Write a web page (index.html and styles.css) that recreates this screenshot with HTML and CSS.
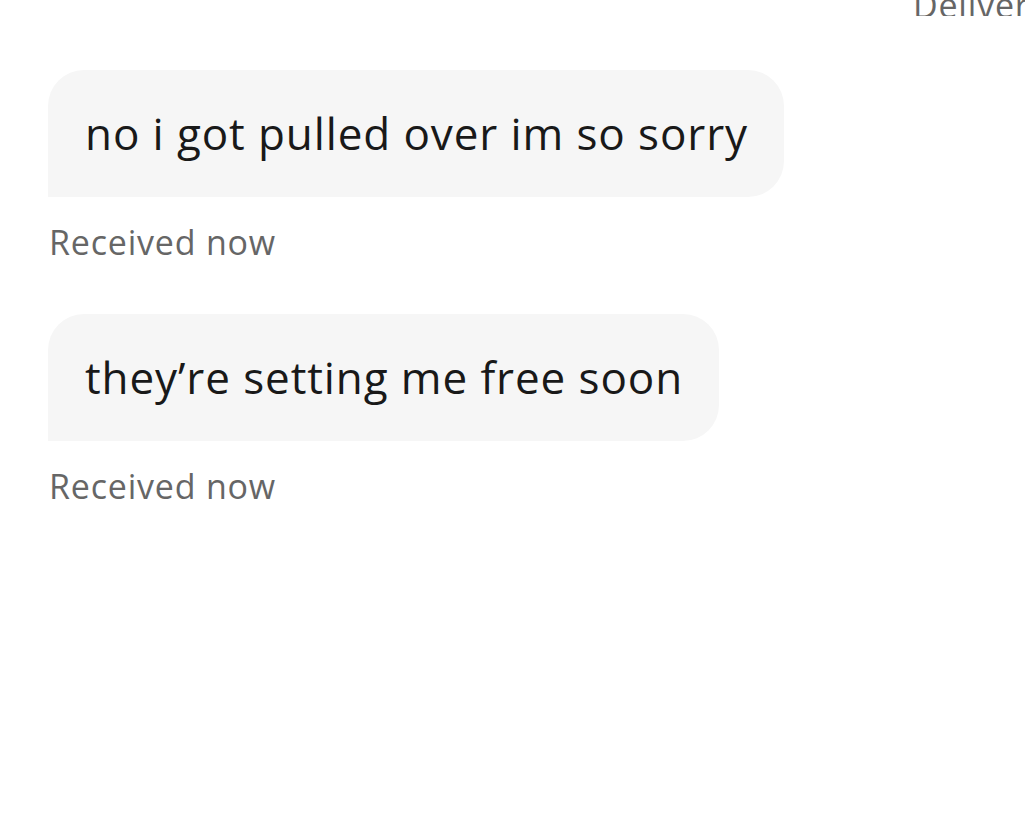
FILE: index.html
```html
<!DOCTYPE html>
<html>
<head>
<meta charset="utf-8">
<link rel="stylesheet" href="styles.css">
</head>
<body>
<div class="status"><span class="status-text">Delivered</span></div>
<div class="thread">
  <div class="msg">
    <div class="bubble">no i got pulled over im so sorry</div>
    <div class="meta">Received now</div>
  </div>
  <div class="msg">
    <div class="bubble">they’re setting me free soon</div>
    <div class="meta">Received now</div>
  </div>
</div>
</body>
</html>
```
FILE: styles.css
```css
html, body {
  margin: 0;
  padding: 0;
  background: #ffffff;
  overflow: hidden;
  width: 1025px;
  height: 823px;
}
body {
  font-family: "Open Sans", sans-serif;
}
.status {
  height: 16px;
  overflow: hidden;
  display: flex;
  align-items: flex-end;
  padding-left: 913px;
  white-space: nowrap;
}
.status-text {
  font-size: 34px;
  font-weight: 500;
  letter-spacing: 0.8px;
  line-height: 30px;
  color: #666666;
  margin-bottom: -4px;
}
.thread {
  display: flex;
  flex-direction: column;
  align-items: flex-start;
  padding-left: 48px;
  padding-top: 54px;
  gap: 55px;
}
.msg {
  display: flex;
  flex-direction: column;
  align-items: flex-start;
}
.bubble {
  background: #f6f6f6;
  color: #191919;
  font-size: 44px;
  font-weight: 500;
  letter-spacing: 0.9px;
  line-height: 127px;
  height: 127px;
  padding: 0 36px 0 37px;
  border-radius: 36px 36px 36px 0;
  white-space: nowrap;
}
.meta {
  margin-top: 28px;
  margin-left: 1px;
  font-size: 34px;
  font-weight: 500;
  letter-spacing: 0.8px;
  line-height: 34px;
  color: #666666;
}
```
